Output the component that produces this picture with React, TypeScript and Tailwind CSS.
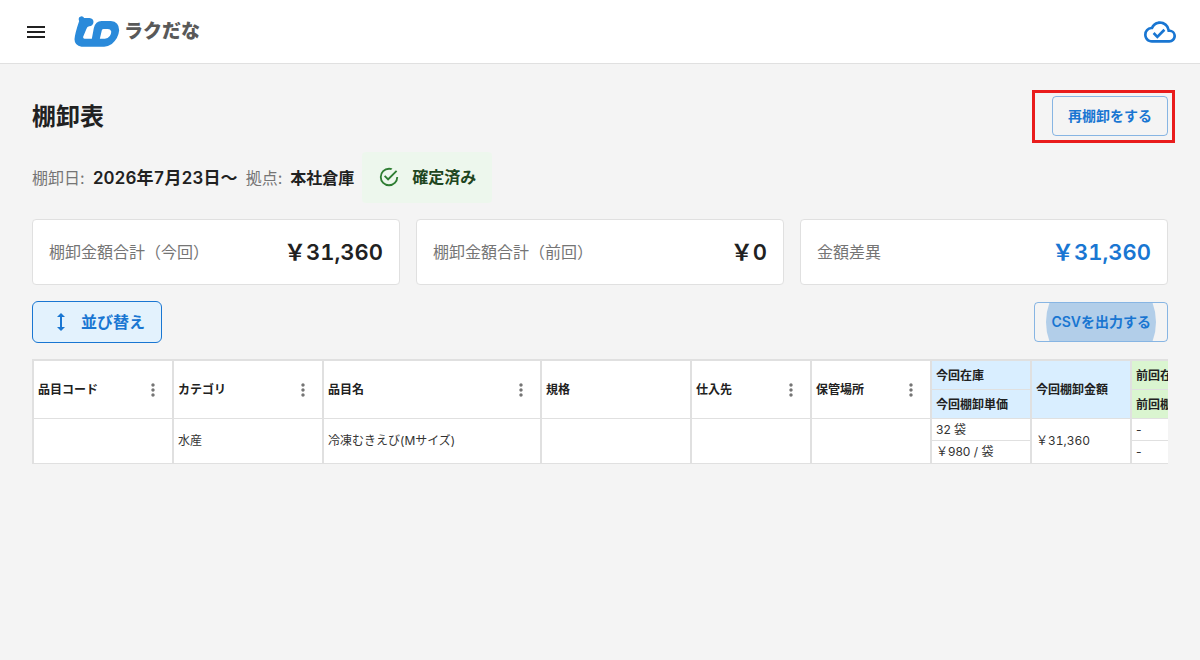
import { MdHeight, MdMenu, MdMoreVert, MdOutlineCloudDone } from 'react-icons/md'

const summaries = [
    { label: '棚卸金額合計（今回）', value: '￥31,360', color: 'text-[#212121]' },
    { label: '棚卸金額合計（前回）', value: '￥0', color: 'text-[#212121]' },
    { label: '金額差異', value: '￥31,360', color: 'text-[#1976d2]' },
]

const columns = [
    { name: '品目コード', width: 'w-[140px]', menu: true },
    { name: 'カテゴリ', width: 'w-[150px]', menu: true },
    { name: '品目名', width: 'w-[218px]', menu: true },
    { name: '規格', width: 'w-[150px]', menu: false },
    { name: '仕入先', width: 'w-[120px]', menu: true },
    { name: '保管場所', width: 'w-[120px]', menu: true },
]

const rows = [
    {
        cells: ['', '水産', '冷凍むきえび(Mサイズ)', '', '', ''],
        stock: '32 袋',
        unitPrice: '￥980 / 袋',
        amount: '￥31,360',
        prevStock: '-',
        prevUnitPrice: '-',
    },
]

function Logo() {
    return (
        <a href="#" className="flex items-center gap-1">
            <svg viewBox="222 45 137 93" className="h-[31px] w-[46px]" fill="#2a8ada" aria-hidden="true">
                <path
                    fillRule="evenodd"
                    d="M237 60Q233 50 240 47Q248 44 252 51L268 51Q280 53 280 63Q279 75 267 76Q261 77 259 83L249 107Q248 113 253 113L275 113L281 81Q286 60 304 60L332 60Q357 62 357 88Q355 112 335 129Q323 137 312 137L244 137Q223 134 223 115Q224 98 237 60ZM311 84Q306 84 305 88L299 113L314 113Q323 113 329 105Q334 98 333 91Q331 84 323 84Z"
                />
            </svg>
            <span className="pt-px text-[19px] leading-6 font-black text-[#595959]">ラクだな</span>
        </a>
    )
}

function SuccessIcon() {
    return (
        <svg viewBox="0 0 24 24" className="size-[22px]" fill="#2e7d32" aria-hidden="true">
            <path d="M20,12A8,8 0 0,1 12,20A8,8 0 0,1 4,12A8,8 0 0,1 12,4C12.76,4 13.5,4.11 14.2,4.31L15.77,2.74C14.61,2.26 13.34,2 12,2A10,10 0 0,0 2,12A10,10 0 0,0 12,22A10,10 0 0,0 22,12M7.91,10.08L6.5,11.5L11,16L21,6L19.59,4.58L11,13.17L7.91,10.08Z" />
        </svg>
    )
}

function Header() {
    return (
        <header className="flex h-16 items-center justify-between border-b border-[#e0e0e0] bg-white pr-6 pl-4">
            <div className="flex items-center gap-[18px]">
                <button type="button" aria-label="メニュー" className="p-2">
                    <MdMenu className="size-6" />
                </button>
                <Logo />
            </div>
            <MdOutlineCloudDone className="size-8 text-[#1976d2]" />
        </header>
    )
}

function StockTable() {
    return (
        <div className="overflow-x-auto border-t border-l border-[#e0e0e0] [scrollbar-width:none]">
            <table className="w-[1198px] table-fixed border-separate border-spacing-0 text-left text-xs leading-4 [&_td]:border-x [&_td]:border-b [&_td]:border-[#e0e0e0] [&_td]:bg-white [&_td]:px-1 [&_td]:text-[#333333] [&_th]:border-x [&_th]:border-b [&_th]:border-[#e0e0e0] [&_th]:pl-1">
                <thead>
                    <tr className="h-[30px]">
                        {columns.map((column) => (
                            <th key={column.name} rowSpan={2} className={`border-t bg-white ${column.width}`}>
                                <div className="flex items-center justify-between pr-[9px]">
                                    {column.name}
                                    {column.menu && (
                                        <button type="button" aria-label={`${column.name}のメニュー`}>
                                            <MdMoreVert className="size-5 text-[#757575]" />
                                        </button>
                                    )}
                                </div>
                            </th>
                        ))}
                        <th className="w-[100px] border-t bg-[#d9eeff] pt-0.5">今回在庫</th>
                        <th rowSpan={2} className="w-[100px] border-t bg-[#d9eeff]">今回棚卸金額</th>
                        <th className="w-[100px] border-t bg-[#daf5d0] pt-0.5">前回在庫</th>
                    </tr>
                    <tr className="h-[29px]">
                        <th className="bg-[#d9eeff] pt-0.5">今回棚卸単価</th>
                        <th className="bg-[#daf5d0] pt-0.5">前回棚卸単価</th>
                    </tr>
                </thead>
                {rows.map((row, index) => (
                    <tbody key={index}>
                        <tr className="h-[22px]">
                            {row.cells.map((cell, i) => (
                                <td key={i} rowSpan={2}>{cell}</td>
                            ))}
                            <td>{row.stock}</td>
                            <td rowSpan={2} className="tabular-nums">{row.amount}</td>
                            <td>{row.prevStock}</td>
                        </tr>
                        <tr className="h-[23px]">
                            <td>{row.unitPrice}</td>
                            <td>{row.prevUnitPrice}</td>
                        </tr>
                    </tbody>
                ))}
            </table>
        </div>
    )
}

export default function App() {
    return (
        <div className="min-h-screen bg-[#f4f4f4] font-['Inter','Noto_Sans_CJK_JP',sans-serif] text-[#212121]">
            <Header />

            <main className="flex flex-col gap-4 px-8 py-8">
                {/* Title */}
                <div className="flex items-center justify-between">
                    <h1 className="pt-0.5 text-2xl font-semibold">棚卸表</h1>
                    <div className="relative">
                        <button
                            type="button"
                            className="h-10 rounded border border-[#1976d2]/50 px-[15px] text-sm font-semibold text-[#1976d2]"
                        >
                            再棚卸をする
                        </button>
                        <span className="pointer-events-none absolute -top-1.5 -right-[7px] -bottom-[7px] -left-5 border-3 border-[#e91c1c]" />
                    </div>
                </div>

                {/* Status */}
                <div className="flex h-[51px] items-center gap-2 leading-6">
                    <span className="text-[#757575]">棚卸日:</span>
                    <span className="text-[17px] font-semibold tabular-nums">2026年7月23日～</span>
                    <span className="text-[#757575]">拠点:</span>
                    <span className="font-semibold">本社倉庫</span>
                    <div className="flex h-full items-center gap-3 rounded bg-[#edf7ed] px-4 pb-0.5 font-semibold text-[#1e4620]">
                        <SuccessIcon />
                        確定済み
                    </div>
                </div>

                {/* Totals */}
                <div className="grid grid-cols-3 gap-4">
                    {summaries.map((summary) => (
                        <div
                            key={summary.label}
                            className="flex items-center justify-between rounded border border-[#e0e0e0] bg-white p-4"
                        >
                            <span className="text-[#757575]">{summary.label}</span>
                            <span className={`text-[22px] leading-8 font-semibold tabular-nums ${summary.color}`}>
                                {summary.value}
                            </span>
                        </div>
                    ))}
                </div>

                {/* Actions */}
                <div className="flex items-center justify-between">
                    <button
                        type="button"
                        className="flex h-[42px] items-center gap-2 rounded-md border border-[#1976d2] bg-[#e3f2fd] px-4 font-semibold text-[#1976d2]"
                    >
                        <MdHeight className="size-6" />
                        並び替え
                    </button>
                    <button
                        type="button"
                        className="relative flex h-10 items-center overflow-hidden rounded border border-[#1976d2]/50 px-4 text-sm font-semibold text-[#1976d2]"
                    >
                        CSVを出力する
                        <span className="absolute top-1/2 left-1/2 size-[110px] -translate-1/2 rounded-full bg-[#1976d2]/30" />
                    </button>
                </div>

                <StockTable />
            </main>
        </div>
    )
}
